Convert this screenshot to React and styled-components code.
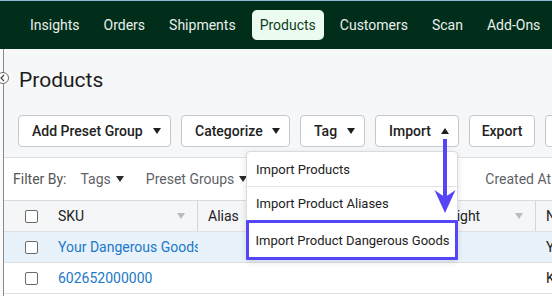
import React from "react";
import styled, { createGlobalStyle } from "styled-components";

const Global = createGlobalStyle`
  html, body { margin: 0; padding: 0; background: #f6f7f9; }
  body { font-family: Roboto, "Liberation Sans", Arial, sans-serif; color: #202124; }
  * { box-sizing: border-box; }
`;

const Frame = styled.div`
  width: 552px;
  height: 296px;
  overflow: hidden;
  display: flex;
  flex-direction: column;
  background: #f6f7f9;
`;

const TopLine = styled.div`
  height: 1px;
  background: #8fb9dc;
  flex: none;
`;

const Nav = styled.nav`
  height: 48px;
  flex: none;
  background: #012e1b;
  display: flex;
  align-items: center;
  padding-left: 22px;
  gap: 8px;
`;

const NavItem = styled.div`
  height: 30px;
  line-height: 30px;
  padding: 0 8px;
  font-size: 14px;
  white-space: nowrap;
  border-radius: 5px;
  color: ${(p) => (p.$active ? "#0f3b25" : "#e9f0ec")};
  background: ${(p) => (p.$active ? "#ebfbef" : "transparent")};
`;

const Body = styled.div`
  flex: 1;
  display: flex;
  min-height: 0;
`;

const Rail = styled.div`
  position: relative;
  width: 4px;
  flex: none;
  background: #fafafa;
  border-right: 1px solid #8a8a8a;
  z-index: 2;
`;

const Collapse = styled.div`
  position: absolute;
  left: -3px;
  top: 23px;
  width: 12px;
  height: 12px;
  border-radius: 50%;
  border: 1px solid #6d6d6d;
  background: #fff;
  display: flex;
  align-items: center;
  justify-content: center;
`;

const Main = styled.div`
  flex: 1;
  min-width: 0;
  padding: 19px 0 0 14px;
  display: flex;
  flex-direction: column;
`;

const Title = styled.h1`
  margin: 0 0 0 1px;
  font-size: 21px;
  line-height: 24px;
  font-weight: 400;
  color: #1c1c1c;
`;

const Toolbar = styled.div`
  margin-top: 23px;
  display: flex;
  gap: 10px;
  height: 32px;
  flex: none;
`;

const Button = styled.div`
  position: relative;
  width: ${(p) => p.$w}px;
  flex: none;
  height: 32px;
  border: 1px solid #c4c7cb;
  border-radius: 4px;
  background: #fff;
  display: flex;
  align-items: center;
  justify-content: ${(p) => (p.$center ? "center" : "flex-start")};
  padding: ${(p) => (p.$center ? "0" : "0 9px 0 13px")};
  font-size: 14px;
  font-weight: 500;
  color: #222;
  white-space: nowrap;
`;

const Caret = styled.span`
  margin-left: auto;
  width: 0;
  height: 0;
  border-left: 4.5px solid transparent;
  border-right: 4.5px solid transparent;
  ${(p) =>
    p.$up
      ? "border-bottom: 6px solid #1e1e1e;"
      : "border-top: 6px solid #1e1e1e;"}
`;

const Menu = styled.div`
  position: absolute;
  right: 0;
  top: calc(100% + 5px);
  width: 212px;
  background: #fff;
  border: 1px solid #d9dbde;
  border-radius: 4px;
  box-shadow: 0 2px 6px rgba(0, 0, 0, 0.12);
  z-index: 5;
  font-weight: 400;
`;

const MenuItem = styled.div`
  height: ${(p) => p.$h}px;
  display: flex;
  align-items: center;
  padding-left: 9px;
  font-size: 13px;
  color: #222;
  border-top: ${(p) => (p.$first ? "none" : "1px solid #e3e5e8")};
  ${(p) =>
    p.$marked &&
    `
    margin: 0 -1px -1px -1px;
    padding-left: 6.5px;
    border: 3.5px solid #5446f6;
    border-radius: 1px;
  `}
`;

const Arrow = styled.svg`
  position: absolute;
  left: 58px;
  top: 23px;
  z-index: 6;
`;

const Card = styled.div`
  margin: 10px 0 0 -14px;
  background: #fff;
  border-top: 1px solid #dcdfe3;
  flex: 1;
  min-width: 0;
`;

const FilterRow = styled.div`
  height: 42px;
  display: flex;
  align-items: center;
  padding-left: 9px;
  gap: 22px;
  font-size: 14px;
  color: #5f6368;
  white-space: nowrap;
`;

const FilterLabel = styled.span`
  color: #555;
  margin-right: -8px;
`;

const Filter = styled.span`
  display: inline-flex;
  align-items: center;
  gap: 5px;
  flex: none;
  width: ${(p) => (p.$w ? `${p.$w}px` : "auto")};
`;

const SmallCaret = styled.span`
  width: 0;
  height: 0;
  border-left: 4px solid transparent;
  border-right: 4px solid transparent;
  border-top: 6px solid #2a2a2a;
`;

const Row = styled.div`
  display: grid;
  grid-template-columns: 44px 150px 130px 99px 109px 140px;
  height: ${(p) => (p.$head ? 32 : 31)}px;
  background: ${(p) => (p.$head ? "#f5f6f8" : p.$selected ? "#e8f2fa" : "#fff")};
  border-top: ${(p) => (p.$head ? "1px solid #d9dcdf" : "none")};
  border-bottom: 1px solid #dfe2e5;
  font-size: 14px;
`;

const Cell = styled.div`
  display: flex;
  align-items: center;
  padding: ${(p) => (p.$check ? "0 0 0 21px" : p.$link ? "0 0 0 10px" : "0 10px")};
  overflow: hidden;
  white-space: nowrap;
  color: ${(p) => (p.$link ? "#1b78c8" : "#222")};
  border-right: ${(p) => (p.$divider ? "1px solid #d3d6da" : "none")};
`;

const Clip = styled.span`
  overflow: hidden;
  white-space: nowrap;
  flex: 1;
  min-width: 0;
`;

const SortCaret = styled.span`
  margin-left: auto;
  margin-right: 2px;
  width: 0;
  height: 0;
  border-left: 4px solid transparent;
  border-right: 4px solid transparent;
  border-top: 6px solid #b9bcc0;
`;

const Checkbox = styled.span`
  width: 13px;
  height: 13px;
  border: 1.3px solid #6a6a6a;
  border-radius: 2px;
  background: #fff;
  flex: none;
`;

const navItems = ["Insights", "Orders", "Shipments", "Products", "Customers", "Scan", "Add-Ons"];

export default function App() {
  return (
    <>
      <Global />
      <Frame>
        <TopLine />
        <Nav>
          {navItems.map((n) => (
            <NavItem key={n} $active={n === "Products"}>
              {n}
            </NavItem>
          ))}
        </Nav>
        <Body>
          <Rail>
            <Collapse>
              <svg width="8" height="8" viewBox="0 0 8 8">
                <path d="M5 1 L2 4 L5 7" fill="none" stroke="#444" strokeWidth="1.2" />
              </svg>
            </Collapse>
          </Rail>
          <Main>
            <Title>Products</Title>
            <Toolbar>
              <Button $w={153}>
                Add Preset Group <Caret />
              </Button>
              <Button $w={109}>
                Categorize <Caret />
              </Button>
              <Button $w={65}>
                Tag <Caret />
              </Button>
              <Button $w={84}>
                Import <Caret $up />
                <Menu>
                  <MenuItem $h={34} $first>
                    Import Products
                  </MenuItem>
                  <MenuItem $h={34}>Import Product Aliases</MenuItem>
                  <MenuItem $h={40} $marked>
                    Import Product Dangerous Goods
                  </MenuItem>
                </Menu>
                <Arrow width="22" height="76" viewBox="0 0 22 76">
                  <rect x="9" y="0" width="4" height="58" fill="#5446f6" />
                  <path d="M0.5 51 Q6 55 11 58 Q16 55 21.5 51 L11 74 Z" fill="#5446f6" />
                </Arrow>
              </Button>
              <Button $w={66} $center>
                Export
              </Button>
              <Button $w={90} $center />
            </Toolbar>
            <Card>
              <FilterRow>
                <FilterLabel>Filter By:</FilterLabel>
                <Filter>
                  Tags <SmallCaret />
                </Filter>
                <Filter>
                  Preset Groups <SmallCaret />
                </Filter>
                <Filter $w={80}>
                  Categories <SmallCaret />
                </Filter>
                <Filter $w={92}>
                  Suppliers <SmallCaret />
                </Filter>
                <Filter>
                  Created At <SmallCaret />
                </Filter>
              </FilterRow>
              <Row $head>
                <Cell $check>
                  <Checkbox />
                </Cell>
                <Cell $divider>
                  SKU <SortCaret />
                </Cell>
                <Cell $divider>Alias</Cell>
                <Cell $divider>Barcode</Cell>
                <Cell $divider>
                  Weight <SortCaret />
                </Cell>
                <Cell>Name</Cell>
              </Row>
              <Row $selected>
                <Cell $check>
                  <Checkbox />
                </Cell>
                <Cell $link>
                  <Clip>Your Dangerous Goods</Clip>
                </Cell>
                <Cell />
                <Cell />
                <Cell />
                <Cell>Your Dangerous Goods</Cell>
              </Row>
              <Row>
                <Cell $check>
                  <Checkbox />
                </Cell>
                <Cell $link>602652000000</Cell>
                <Cell />
                <Cell />
                <Cell />
                <Cell>Kit</Cell>
              </Row>
            </Card>
          </Main>
        </Body>
      </Frame>
    </>
  );
}
